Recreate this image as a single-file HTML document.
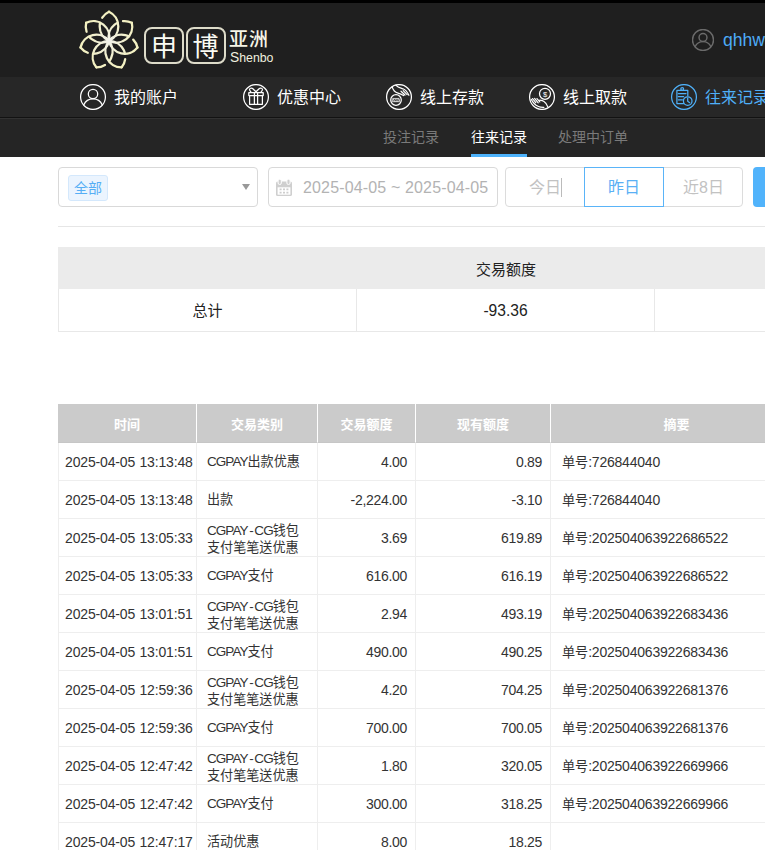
<!DOCTYPE html>
<html lang="zh-CN">
<head>
<meta charset="utf-8">
<title>往来记录</title>
<style>
*{box-sizing:border-box;margin:0;padding:0}
html,body{width:765px;height:850px;overflow:hidden;background:#fff}
body{font-family:"Liberation Sans","Noto Sans CJK SC",sans-serif;color:#333;position:relative;font-size:14px}
a{text-decoration:none;color:inherit}
.topbar{position:absolute;left:0;top:0;width:765px;height:3px;background:#000}
.header{position:absolute;left:0;top:3px;width:765px;height:74px;background:#1f1f1f}
.flower{position:absolute;left:76px;top:5px}
.lbox{position:absolute;top:24px;width:40px;height:37px;border:2px solid #dddbc9;border-radius:8px;color:#fbfbf3;font-size:26px;line-height:31px;text-align:center;font-family:"Noto Sans CJK SC",sans-serif}
.lname{position:absolute;left:229px;top:23.4px;color:#f6f5e6;font-size:19px;line-height:24px;letter-spacing:1px;font-family:"Noto Sans CJK SC",sans-serif;font-weight:500}
.len{position:absolute;left:229.5px;top:46px;color:#f0efdf;font-size:13.4px;line-height:16px;font-family:"Liberation Sans",sans-serif;transform:scaleX(0.92);transform-origin:0 0}
.len::first-letter{font-size:15px}
.uicon{position:absolute;left:692px;top:26px;color:#6b6b6b}
.uname{position:absolute;left:723px;top:26px;color:#4dabf7;font-size:17.6px;line-height:22px;white-space:nowrap;font-family:"Liberation Sans",sans-serif}
.nav{position:absolute;left:0;top:77px;width:765px;height:41px;background:#272727;border-bottom:1px solid #121212}
.ni{position:absolute;top:7px;height:26px;color:#fff;white-space:nowrap;display:block}
.ni svg{position:absolute;left:0;top:0}
.ni span{position:absolute;left:34px;top:2px;font-size:16px;line-height:24px}
.ni.act{color:#4fb0f8}
.subnav{position:absolute;left:0;top:118px;width:765px;height:39px;background:#252525;border-top:1px solid #323232}
.si{position:absolute;top:8px;font-size:14px;line-height:20px;color:#7a7a7a;white-space:nowrap}
.si.act{color:#fff}
.si.act:after{content:"";position:absolute;left:0;right:0;top:27px;height:3px;background:#4db2fb}
.sel{position:absolute;left:58px;top:167px;width:200px;height:40px;border:1px solid #d9d9d9;border-radius:4px;background:#fff}
.tag{position:absolute;left:9px;top:7px;width:40px;height:26px;border:1px solid #d4e8fc;border-radius:3px;background:#ebf4fe;color:#55aef5;font-size:14px;line-height:24px;text-align:center}
.caret{position:absolute;left:183px;top:16px;width:0;height:0;border-left:4px solid transparent;border-right:4px solid transparent;border-top:6px solid #999}
.date{position:absolute;left:268px;top:167px;width:230px;height:40px;border:1px solid #d9d9d9;border-radius:4px;background:#fff;color:#b3b3b3;font-size:16px;line-height:40px;padding-left:34px;white-space:nowrap;font-family:"Liberation Sans",sans-serif;letter-spacing:0.15px}
.date svg{position:absolute;left:7px;top:10.5px}
.bgrp{position:absolute;left:505px;top:167px;width:238px;height:40px;border:1px solid #dcdcdc;border-radius:4px;background:#fff}
.bgrp span{position:absolute;top:-1px;height:40px;line-height:42px;font-size:16px;color:#c2c2c2;text-align:center}
.bgrp .on{border:1px solid #5ab4f8;color:#5ab0f5}
.cursor{position:absolute;left:561px;top:178px;width:1px;height:19px;background:#bbb}
.go{position:absolute;left:753px;top:167px;width:60px;height:40px;border-radius:4px;background:#51b3fb}
.hr{position:absolute;left:58px;top:226px;width:707px;height:1px;background:#e6e6e6}
.sum{position:absolute;left:58px;top:247px;width:1193px;border-collapse:separate;border-spacing:0;table-layout:fixed;font-size:15px}
.sum th{height:42px;background:#ebebeb;font-weight:normal;color:#222}
.sum td{height:43px;border-right:1px solid #e8e8e8;border-bottom:1px solid #e8e8e8;text-align:center;color:#222;font-size:15.6px}
.sum td:first-child{border-left:1px solid #e8e8e8}
.main{position:absolute;left:58px;top:404px;width:745px;border-collapse:separate;border-spacing:0;table-layout:fixed}
.main th{height:39px;background:#cbcbcb;color:#fff;font-size:13px;font-weight:bold;border-right:1px solid #fff;border-bottom:1px solid #c6c6c6;text-align:center}
.main td{height:38px;border-right:1px solid #eee;border-bottom:1px solid #eee;font-size:14px;letter-spacing:-0.15px;word-spacing:0.6px;color:#333;white-space:nowrap;vertical-align:middle;font-family:"Liberation Sans",sans-serif}
.main td:first-child{border-left:1px solid #eee}
.main td.t{padding-left:6px}
.main td.k{padding-left:10px;font-size:13.5px;letter-spacing:-0.95px;word-spacing:0}
.main td.k div{line-height:18px}
.main td.k .ln{display:block;height:17px;line-height:17px}
.main td.k div.two{position:relative;top:0px}
.h{padding:0 1.6px 0 1.7px}
.main td.n{text-align:right;padding-right:8px;letter-spacing:-0.3px}
.main td.m{padding-left:11px;letter-spacing:-0.22px}
.c15{font-size:15px;position:relative;top:-1px}
.sum td.num{padding-top:2px}
.c{font-family:"Noto Sans CJK SC",sans-serif;font-size:13.1px;letter-spacing:0}
</style>
</head>
<body>
<div class="topbar"></div>
<div class="header">
<svg class="flower" width="66" height="66" viewBox="-33 -33 66 66"><defs><radialGradient id="fg" gradientUnits="userSpaceOnUse" cx="0" cy="0" r="30"><stop offset="0" stop-color="#f2f2ec"/><stop offset="0.45" stop-color="#f1efd0"/><stop offset="1" stop-color="#f4f1bf"/></radialGradient></defs><g fill="none" stroke="url(#fg)" stroke-width="2.3" stroke-linecap="round"><g transform="rotate(-90.00)"><path d="M0 0A16.1 16.1 0 0 0 29.2 0"/><path d="M0 0A16.1 16.1 0 0 1 29.2 0" stroke-dasharray="21.8 5.6 12"/></g><g transform="rotate(-38.57)"><path d="M0 0A16.1 16.1 0 0 0 29.2 0"/><path d="M0 0A16.1 16.1 0 0 1 29.2 0" stroke-dasharray="21.8 5.6 12"/></g><g transform="rotate(12.86)"><path d="M0 0A16.1 16.1 0 0 0 29.2 0"/><path d="M0 0A16.1 16.1 0 0 1 29.2 0" stroke-dasharray="21.8 5.6 12"/></g><g transform="rotate(64.29)"><path d="M0 0A16.1 16.1 0 0 0 29.2 0"/><path d="M0 0A16.1 16.1 0 0 1 29.2 0" stroke-dasharray="21.8 5.6 12"/></g><g transform="rotate(115.71)"><path d="M0 0A16.1 16.1 0 0 0 29.2 0"/><path d="M0 0A16.1 16.1 0 0 1 29.2 0" stroke-dasharray="21.8 5.6 12"/></g><g transform="rotate(167.14)"><path d="M0 0A16.1 16.1 0 0 0 29.2 0"/><path d="M0 0A16.1 16.1 0 0 1 29.2 0" stroke-dasharray="21.8 5.6 12"/></g><g transform="rotate(218.57)"><path d="M0 0A16.1 16.1 0 0 0 29.2 0"/><path d="M0 0A16.1 16.1 0 0 1 29.2 0" stroke-dasharray="21.8 5.6 12"/></g></g></svg>
<div class="lbox" style="left:144px">申</div>
<div class="lbox" style="left:185.5px">博</div>
<div class="lname">亚洲</div>
<div class="len">Shenbo</div>
<svg class="uicon" width="22" height="22" viewBox="0 0 26 26" fill="none" stroke="currentColor" stroke-width="1.7" stroke-linecap="round"><circle cx="13" cy="13" r="12.4"/><circle cx="13" cy="10" r="4.7"/><path d="M3.7 20.9A10.2 10.2 0 0 1 22.3 20.9"/></svg>
<div class="uname">qhhw</div>
</div>
<div class="nav">
<a class="ni" style="left:80px"><svg width="26" height="26" viewBox="0 0 26 26" fill="none" stroke="currentColor" stroke-width="1.25" stroke-linecap="round" stroke-linejoin="round"><circle cx="13" cy="13" r="12.4"/><circle cx="13" cy="10" r="4.7"/><path d="M3.7 20.9A10.2 10.2 0 0 1 22.3 20.9"/></svg><span>我的账户</span></a>
<a class="ni" style="left:243px"><svg width="26" height="26" viewBox="0 0 26 26" fill="none" stroke="currentColor" stroke-width="1.25" stroke-linecap="round" stroke-linejoin="round"><circle cx="13" cy="13" r="12.4"/><path d="M5.8 8.7h14.4v2.8H5.8zM6.6 11.5v8.8h12.8v-8.8M11.4 8.7v11.6M14.6 8.7v11.6M13 7.8L9.9 4.7C8.6 3.6 6.2 4.2 6.6 5.9 6.9 7 7.9 7.8 8.4 8.5M13 7.8l3.1-3.1c1.3-1.1 3.7-.5 3.3 1.2-.3 1.1-1.3 1.9-1.8 2.6"/></svg><span>优惠中心</span></a>
<a class="ni" style="left:386px"><svg width="26" height="26" viewBox="0 0 26 26" fill="none" stroke="currentColor" stroke-width="1.25" stroke-linecap="round" stroke-linejoin="round"><circle cx="13" cy="13" r="12.4"/><circle cx="10" cy="16" r="5.3"/><path fill="currentColor" stroke-width=".5" d="M6.9 14.4h6.2l.6 3.4H6.3z"/><path stroke="#272727" stroke-width=".7" d="M7.4 17.1l.9-2 .9 2 .9-2 .9 2 .9-2 .9 2"/><path d="M6.2 2.9C7 6 9 8.4 12 9.1s4 1.4 5.6 2.5M10 1.3c2 2.2 5 2.7 7.5 3.7s4.3 4 5.4 6.3M15 7.2l4 3.8M17.3 6.6l3.8 4"/></svg><span>线上存款</span></a>
<a class="ni" style="left:529px"><svg width="26" height="26" viewBox="0 0 26 26" fill="none" stroke="currentColor" stroke-width="1.25" stroke-linecap="round" stroke-linejoin="round"><circle cx="13" cy="13" r="12.4"/><circle cx="16" cy="9.8" r="5.5"/><text x="16" y="12.5" text-anchor="middle" font-family="Liberation Sans, sans-serif" font-size="7.6" fill="currentColor" stroke="none">$</text><path d="M2.4 15.4C3.5 18 5.4 20.4 9.5 22.5c2 1 3.5.9 5.3.9M10.8 16.2c1.7.3 3 .6 4.2 1.3 1.4.8 2.9 2.9 3.8 5.4M3.6 14.6l3.2 4M5.6 14.4l3.6 4.4M8 14.6l2.8 3.3"/></svg><span>线上取款</span></a>
<a class="ni act" style="left:671px"><svg width="26" height="26" viewBox="0 0 26 26" fill="none" stroke="currentColor" stroke-width="1.25" stroke-linecap="round" stroke-linejoin="round"><circle cx="13" cy="13" r="12.4"/><path d="M12.6 19.5H5.9V6.3h10.9v5.4M7.4 9.6h7.6M7.4 12.7h5.2M7.4 15.8h4"/><circle cx="11.2" cy="5" r="1.4"/><circle cx="16.7" cy="17.1" r="4.3"/><path d="M16.7 14v3.3l2 1.4"/></svg><span>往来记录</span></a>
</div>
<div class="subnav">
<a class="si" style="left:383px">投注记录</a>
<a class="si act" style="left:471px">往来记录</a>
<a class="si" style="left:558px">处理中订单</a>
</div>
<div class="sel"><div class="tag">全部</div><div class="caret"></div></div>
<div class="date"><svg width="17" height="18" viewBox="0 0 17 18"><rect x="0" y="2.6" width="16" height="14.4" rx="1.6" fill="#cfcfcf"/><rect x="1.6" y="8.3" width="12.8" height="7.4" fill="#fff"/><rect x="2.1" y="0.3" width="3.2" height="5.2" rx="1.5" fill="#cfcfcf" stroke="#fff" stroke-width="1"/><rect x="10.9" y="0.3" width="3.2" height="5.2" rx="1.5" fill="#cfcfcf" stroke="#fff" stroke-width="1"/><path fill="#cdcdcd" d="M3.6 9.5h2v1.8h-2zM7 9.5h2v1.8H7zM10.4 9.5h2v1.8h-2zM3.6 12.8h2v1.8h-2zM7 12.8h2v1.8H7zM10.4 12.8h2v1.8h-2z"/></svg>2025-04-05 ~ 2025-04-05</div>
<div class="bgrp"><span style="left:-1px;width:80px">今日</span><span class="on" style="left:78px;width:80px;line-height:40px">昨日</span><span style="left:158px;width:79px">近8日</span></div>
<div class="cursor"></div>
<div class="go"></div>
<div class="hr"></div>
<table class="sum">
<colgroup><col style="width:299px"><col style="width:298px"><col style="width:298px"><col style="width:298px"></colgroup>
<tr><th></th><th>交易额度</th><th></th><th></th></tr>
<tr><td><span class="c15">总计</span></td><td class="num">-93.36</td><td></td><td></td></tr>
</table>
<table class="main">
<colgroup><col style="width:139px"><col style="width:121px"><col style="width:98px"><col style="width:135px"><col style="width:252px"></colgroup>
<tr><th>时间</th><th>交易类别</th><th>交易额度</th><th>现有额度</th><th>摘要</th></tr>
<tr><td class="t">2025-04-05 13:13:48</td><td class="k"><div>CGPAY<span class="c">出款优惠</span></div></td><td class="n">4.00</td><td class="n">0.89</td><td class="m"><span class="c">单号</span>:726844040</td></tr>
<tr><td class="t">2025-04-05 13:13:48</td><td class="k"><div><span class="c">出款</span></div></td><td class="n">-2,224.00</td><td class="n">-3.10</td><td class="m"><span class="c">单号</span>:726844040</td></tr>
<tr><td class="t">2025-04-05 13:05:33</td><td class="k"><div class="two"><span class="ln">CGPAY<span class="h">-</span>CG<span class="c">钱包</span></span><span class="ln"><span class="c">支付笔笔送优惠</span></span></div></td><td class="n">3.69</td><td class="n">619.89</td><td class="m"><span class="c">单号</span>:202504063922686522</td></tr>
<tr><td class="t">2025-04-05 13:05:33</td><td class="k"><div>CGPAY<span class="c">支付</span></div></td><td class="n">616.00</td><td class="n">616.19</td><td class="m"><span class="c">单号</span>:202504063922686522</td></tr>
<tr><td class="t">2025-04-05 13:01:51</td><td class="k"><div class="two"><span class="ln">CGPAY<span class="h">-</span>CG<span class="c">钱包</span></span><span class="ln"><span class="c">支付笔笔送优惠</span></span></div></td><td class="n">2.94</td><td class="n">493.19</td><td class="m"><span class="c">单号</span>:202504063922683436</td></tr>
<tr><td class="t">2025-04-05 13:01:51</td><td class="k"><div>CGPAY<span class="c">支付</span></div></td><td class="n">490.00</td><td class="n">490.25</td><td class="m"><span class="c">单号</span>:202504063922683436</td></tr>
<tr><td class="t">2025-04-05 12:59:36</td><td class="k"><div class="two"><span class="ln">CGPAY<span class="h">-</span>CG<span class="c">钱包</span></span><span class="ln"><span class="c">支付笔笔送优惠</span></span></div></td><td class="n">4.20</td><td class="n">704.25</td><td class="m"><span class="c">单号</span>:202504063922681376</td></tr>
<tr><td class="t">2025-04-05 12:59:36</td><td class="k"><div>CGPAY<span class="c">支付</span></div></td><td class="n">700.00</td><td class="n">700.05</td><td class="m"><span class="c">单号</span>:202504063922681376</td></tr>
<tr><td class="t">2025-04-05 12:47:42</td><td class="k"><div class="two"><span class="ln">CGPAY<span class="h">-</span>CG<span class="c">钱包</span></span><span class="ln"><span class="c">支付笔笔送优惠</span></span></div></td><td class="n">1.80</td><td class="n">320.05</td><td class="m"><span class="c">单号</span>:202504063922669966</td></tr>
<tr><td class="t">2025-04-05 12:47:42</td><td class="k"><div>CGPAY<span class="c">支付</span></div></td><td class="n">300.00</td><td class="n">318.25</td><td class="m"><span class="c">单号</span>:202504063922669966</td></tr>
<tr><td class="t">2025-04-05 12:47:17</td><td class="k"><div><span class="c">活动优惠</span></div></td><td class="n">8.00</td><td class="n">18.25</td><td class="m"></td></tr>
</table>
</body>
</html>
